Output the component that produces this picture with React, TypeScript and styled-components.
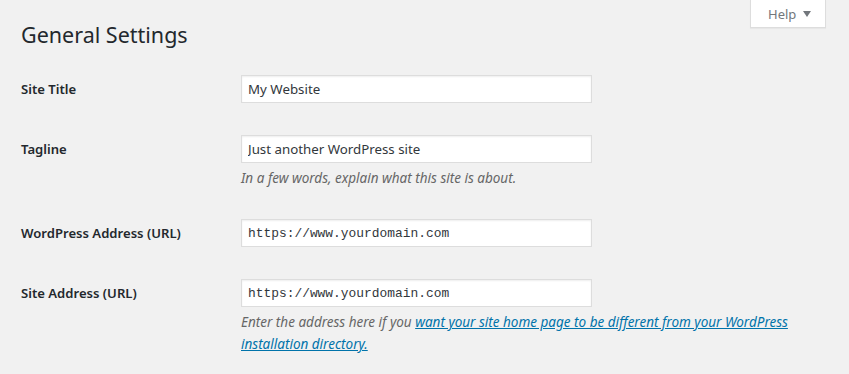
import React from 'react';
import styled, { createGlobalStyle } from 'styled-components';

const GlobalStyle = createGlobalStyle`
  body {
    margin: 0;
    background: #f1f1f1;
    font-family: "Noto Sans", "Open Sans", sans-serif;
    color: #444;
  }
`;

interface FieldRowProps {
  label: string;
  value: string;
  mono?: boolean;
  note?: React.ReactNode;
}

const FieldRow = ({ label, value, mono, note }: FieldRowProps) => (
  <Row $note={!!note}>
    <LabelCell>
      <Label>{label}</Label>
    </LabelCell>
    <FieldCell>
      <TextInput type="text" defaultValue={value} $mono={mono} />
      {note && <Description>{note}</Description>}
    </FieldCell>
  </Row>
);

export default function App() {
  return (
    <>
      <GlobalStyle />
      <Page>
        <TopBar>
          <Title>General Settings</Title>
          <HelpTab>
            Help
            <Caret />
          </HelpTab>
        </TopBar>
        <Form>
          <FieldRow label="Site Title" value="My Website" />
          <FieldRow
            label="Tagline"
            value="Just another WordPress site"
            note="In a few words, explain what this site is about."
          />
          <FieldRow
            label="WordPress Address (URL)"
            value="https://www.yourdomain.com"
            mono
          />
          <FieldRow
            label="Site Address (URL)"
            value="https://www.yourdomain.com"
            mono
            note={
              <>
                Enter the address here if you{' '}
                <Link href="#">
                  want your site home page to be different from your WordPress
                  installation directory.
                </Link>
              </>
            }
          />
        </Form>
      </Page>
    </>
  );
}

const Page = styled.div`
  padding: 0 23px 0 21px;
`;

const TopBar = styled.div`
  display: flex;
  justify-content: space-between;
  align-items: flex-start;
  height: 60px;
`;

const Title = styled.h1`
  margin: 20px 0 0;
  font-size: 21.5px;
  font-weight: 400;
  line-height: 30px;
  color: #23282d;
`;

const HelpTab = styled.button`
  display: flex;
  align-items: center;
  gap: 7px;
  height: 28px;
  width: 76px;
  padding: 0 0 0 17px;
  background: #fff;
  border: 1px solid #ddd;
  border-top: none;
  box-shadow: 0 1px 1px rgba(0, 0, 0, 0.04);
  font-family: inherit;
  font-size: 13px;
  color: #72777c;
  cursor: pointer;
`;

const Caret = styled.span`
  width: 0;
  height: 0;
  border-left: 4px solid transparent;
  border-right: 4px solid transparent;
  border-top: 6px solid #72777c;
`;

const Form = styled.div`
  display: flex;
  flex-direction: column;
`;

const Row = styled.div<{ $note: boolean }>`
  display: grid;
  grid-template-columns: 220px 1fr;
  padding: 15px 0 ${(p) => (p.$note ? 15 : 17)}px;
`;

const LabelCell = styled.div`
  display: flex;
  align-items: center;
  height: 28px;
`;

const Label = styled.label`
  font-size: 13.1px;
  font-weight: 600;
  color: #23282d;
`;

const FieldCell = styled.div`
  display: flex;
  flex-direction: column;
  align-items: flex-start;
`;

const TextInput = styled.input<{ $mono?: boolean }>`
  box-sizing: border-box;
  width: 351px;
  height: 28px;
  margin: 0;
  padding: 0 6px;
  background: #fff;
  border: 1px solid #ddd;
  box-shadow: inset 0 1px 2px rgba(0, 0, 0, 0.07);
  outline: none;
  font-family: ${(p) =>
    p.$mono ? '"Liberation Mono", "DejaVu Sans Mono", monospace' : 'inherit'};
  font-size: ${(p) => (p.$mono ? '12.9px' : '13.3px')};
  color: #32373c;
`;

const Description = styled.p`
  margin: 4px 0 0;
  font-size: 13.5px;
  font-style: italic;
  line-height: 22px;
  color: #666;
`;

const Link = styled.a`
  color: #0073aa;
  text-decoration: underline;
`;
